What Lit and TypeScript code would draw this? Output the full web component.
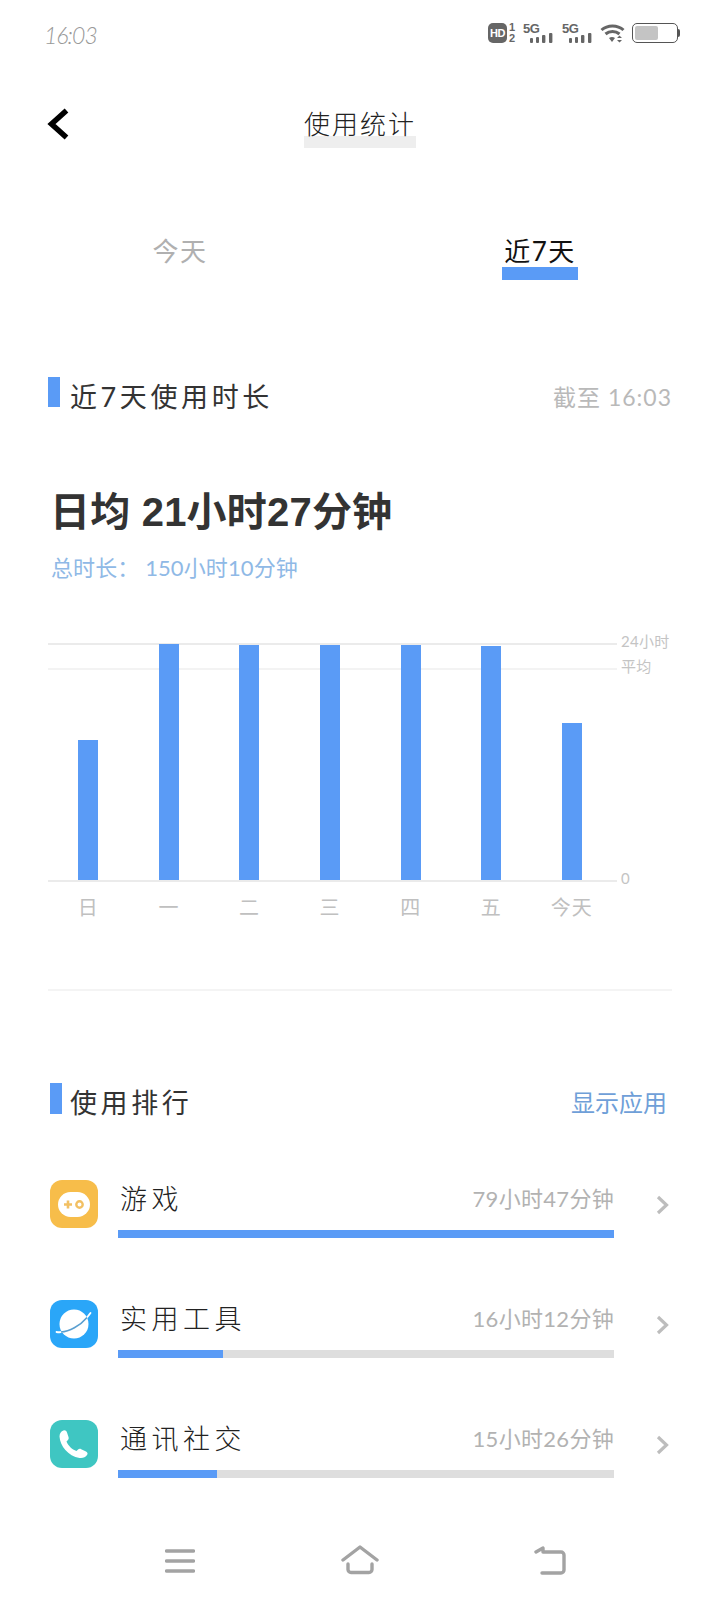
import { LitElement, html, css } from 'lit';
import { customElement } from 'lit/decorators.js';

const BARS = [
  { label: '日', h: 140 },
  { label: '一', h: 236 },
  { label: '二', h: 235 },
  { label: '三', h: 235 },
  { label: '四', h: 235 },
  { label: '五', h: 234 },
  { label: '今天', h: 157 },
];

const LINES = [
  { top: 0, label: '24小时', cls: 'strong' },
  { top: 25, label: '平均', cls: '' },
  { top: 237, label: '0', cls: 'strong' },
];

const gameIcon = html`<svg viewBox="0 0 48 48" width="48" height="48">
  <rect width="48" height="48" rx="12" fill="#f7bd4a"/>
  <rect x="8" y="12" width="32" height="25" rx="12.5" fill="#fff"/>
  <path d="M14 24.5h8M18 20.5v8" stroke="#f2c063" stroke-width="2.6" fill="none"/>
  <circle cx="29.5" cy="24.5" r="3.2" stroke="#f2c063" stroke-width="2.4" fill="none"/>
</svg>`;

const planetIcon = html`<svg viewBox="0 0 48 48" width="48" height="48">
  <rect width="48" height="48" rx="12" fill="#2aa6f8"/>
  <circle cx="24" cy="24" r="14.5" fill="#fff"/>
  <path d="M6.5 32C15 33.5 31 27 40.5 13" stroke="#fff" stroke-width="1.8" fill="none" stroke-linecap="round"/>
  <path d="M11 32C19 31.5 30 26 37 17.5" stroke="#5a9fd0" stroke-width="1.6" fill="none"/>
</svg>`;

const phoneIcon = html`<svg viewBox="0 0 48 48" width="48" height="48">
  <rect width="48" height="48" rx="12" fill="#3fc6c2"/>
  <path fill="#fff" d="M13.5 10.5C15 10 16.5 11 17 12.5L18.5 17C19 18.5 18.5 19.5 17.5 20.5L16.5 21.5C18 25.5 22 29.5 26.5 31L27.8 29.8C28.8 28.8 30 28.6 31.2 29.2L36 31.5C37.5 32.2 38 33.5 37.2 34.8C35.5 37.5 32.5 38.5 29.5 38C18 36 10 26 9.5 16.5C9.5 13.5 11 11.2 13.5 10.5Z"/>
</svg>`;

const RANKS = [
  { name: '游戏', time: '79小时47分钟', fill: 100, icon: gameIcon },
  { name: '实用工具', time: '16小时12分钟', fill: 21.1, icon: planetIcon },
  { name: '通讯社交', time: '15小时26分钟', fill: 20, icon: phoneIcon },
];

const signal = html`<svg class="sig" viewBox="0 0 23 10" width="23" height="10">
  <rect x="0" y="5" width="3" height="5" rx="1" fill="#666"/>
  <rect x="6" y="4" width="3" height="6" rx="1" fill="#666"/>
  <rect x="12" y="2" width="3.4" height="8" rx="1" fill="#666"/>
  <rect x="19" y="0" width="3.4" height="10" rx="1" fill="#666"/>
</svg>`;

@customElement('app-root')
export class AppRoot extends LitElement {
  static styles = css`
    :host {
      display: block;
      width: 720px;
      height: 1603px;
      background: #fff;
      overflow: hidden;
      font-family: Lato, 'Noto Sans CJK SC', sans-serif;
    }

    .page { display: flex; flex-direction: column; height: 100%; }

    /* status bar */
    .status {
      height: 66px;
      padding: 0 40px 0 44px;
      display: flex;
      align-items: center;
      color: #666;
    }
    .time {
      font-size: 23px;
      font-weight: 300;
      font-style: italic;
      color: #999;
      letter-spacing: -1px;
      margin-top: 4px;
      margin-right: auto;
    }
    .hd {
      width: 19px;
      height: 20px;
      border-radius: 5px;
      background: #666;
      color: #fff;
      font: bold 11px/20px 'Liberation Sans', sans-serif;
      text-align: center;
      letter-spacing: -0.5px;
    }
    .sims {
      display: flex;
      flex-direction: column;
      margin-left: 2px;
      width: 14px;
      font: bold 11px/11px 'Liberation Sans', sans-serif;
    }
    .net { position: relative; width: 30px; height: 20px; margin-right: 9px; display: flex; align-items: flex-end; justify-content: flex-end; }
    .net + .net { margin-right: 8px; }
    .net span {
      position: absolute;
      left: 0;
      top: 0;
      font: bold 13px/11px 'Liberation Sans', sans-serif;
      letter-spacing: -0.5px;
    }
    .wifi { margin-right: 7px; }
    .battery {
      box-sizing: border-box;
      width: 46px;
      height: 20px;
      border: 1.5px solid #555;
      border-radius: 5px;
      padding: 2px;
      display: flex;
    }
    .battery i { width: 23px; background: #c4c4c4; border-radius: 2px; }
    .nub { width: 2px; height: 8px; background: #555; border-radius: 0 2px 2px 0; }

    /* top bar */
    .topbar {
      margin-top: 44px;
      height: 38px;
      padding: 0 47px;
      display: grid;
      grid-template-columns: 22px 1fr 22px;
    }
    .back { display: block; margin-top: -2px; }
    .title {
      justify-self: center;
      font-size: 26px;
      line-height: 28px;
      padding: 0 0 10px;
      letter-spacing: 2px;
      color: #222;
      font-weight: 300;
      background: linear-gradient(#fff 0 26px, #eee 26px);
    }

    /* tabs */
    .tabs {
      margin-top: 88px;
      display: grid;
      grid-template-columns: 360px 360px;
      height: 44px;
    }
    .tab {
      display: flex;
      flex-direction: column;
      align-items: center;
      font-size: 26px;
      line-height: 31px;
      letter-spacing: 1.5px;
      color: #b0b0b0;
    }
    .tab.on { color: #111; }
    .tab.on::after {
      content: '';
      width: 76px;
      height: 13px;
      background: #5a9bf6;
    }

    /* section headers */
    .head {
      display: flex;
      align-items: center;
      padding: 0 48px;
      margin-top: 97px;
    }
    .head .mark { width: 12px; height: 30px; background: #5a9bf6; margin-right: 10px; align-self: flex-start; }
    .head .name { font-size: 27px; line-height: 30px; letter-spacing: 3.6px; color: #333; margin-top: 5px; }
    .head .side { margin-left: auto; font-size: 23px; line-height: 30px; color: #b9b9b9; letter-spacing: 1px; margin-top: 4px; }
    .head.rank { margin-top: 92px; padding: 0 53px 0 50px; }
    .head.rank .mark { height: 31px; margin-right: 8px; }
    .head.rank .side { color: #6f9fd8; font-size: 24px; letter-spacing: 0; }

    /* summary */
    .avg {
      margin: 78px 0 0 50px;
      font: bold 40px/44px 'Liberation Sans', 'Noto Sans CJK SC', sans-serif;
      letter-spacing: 0.2px;
      color: #333;
    }
    .total {
      margin: 20px 0 0 51px;
      font-size: 22px;
      line-height: 28px;
      color: #8fb9e6;
      letter-spacing: 0.1px;
    }

    /* chart */
    .chart { margin: 61px 0 0 48px; width: 569px; }
    .plot { position: relative; height: 237px; }
    .line { position: absolute; left: 0; right: 0; height: 2px; background: #f3f3f3; }
    .line.strong { background: #ebebeb; }
    .line span {
      position: absolute;
      left: calc(100% + 4px);
      top: -14px;
      font-size: 15px;
      line-height: 24px;
      white-space: nowrap;
      color: #c4c4c4;
      letter-spacing: 0.3px;
    }
    .bars, .days { display: grid; grid-template-columns: repeat(7, 80.6px); }
    .bars { position: relative; height: 100%; align-items: end; justify-items: center; }
    .bar { width: 20px; background: #5a9bf6; }
    .days { margin-top: 15px; justify-items: center; font-size: 20px; line-height: 24px; color: #c0c0c0; letter-spacing: 1px; }

    .divider { margin: 70px 48px 0; height: 2px; background: #f4f4f4; flex: none; }

    /* ranking */
    .ranks { margin-top: 62px; padding-left: 50px; display: flex; flex-direction: column; gap: 72px; }
    .row { display: flex; height: 48px; }
    .icon { width: 48px; height: 48px; margin-right: 20px; }
    .body { width: 496px; }
    .meta { display: flex; justify-content: space-between; align-items: center; height: 50px; padding-bottom: 16px; box-sizing: border-box; }
    .meta b { font-weight: 300; font-size: 27px; letter-spacing: 4.5px; color: #222; padding-left: 2px; }
    .meta span { font-size: 22px; letter-spacing: 0.3px; color: #b2b2b2; }
    .track { height: 8px; background: #dedede; }
    .fill { height: 100%; background: #5a9bf6; }
    .more { margin: 15px 0 0 42px; flex: none; }

    /* nav bar */
    .nav { margin-top: auto; padding: 0 0 28px 165px; display: flex; align-items: flex-start; }
    .nav svg { display: block; flex: none; }
    .nav .home { margin-left: 146px; }
    .nav .ret { margin-left: 155px; }
  `;

  render() {
    return html`<div class="page">
      <div class="status">
        <span class="time">16:03</span>
        <span class="hd">HD</span>
        <span class="sims"><span>1</span><span>2</span></span>
        <span class="net"><span>5G</span>${signal}</span>
        <span class="net"><span>5G</span>${signal}</span>
        <svg class="wifi" viewBox="0 0 25 20" width="25" height="20">
          <path d="M1.5 7C7.5 1.5 17.5 1.5 23.5 7" stroke="#666" stroke-width="3" fill="none"/>
          <path d="M5.5 11C9.5 7.5 15.5 7.5 19.5 11" stroke="#666" stroke-width="3" fill="none"/>
          <path d="M9 15C11 13.5 13 13.5 15 15L12 19Z" fill="#666"/>
          <path d="M17 15l2.5-2.5L22 15ZM17 17l2.5 2.5L22 17Z" fill="#666"/>
        </svg>
        <span class="battery"><i></i></span><span class="nub"></span>
      </div>

      <div class="topbar">
        <svg class="back" viewBox="0 0 22 32" width="22" height="32">
          <path d="M19.5 2.5L4.5 16L19.5 29.5" stroke="#000" stroke-width="5.5" fill="none"/>
        </svg>
        <div class="title">使用统计</div>
      </div>

      <div class="tabs">
        <div class="tab">今天</div>
        <div class="tab on">近7天</div>
      </div>

      <div class="head">
        <span class="mark"></span>
        <span class="name">近7天使用时长</span>
        <span class="side">截至 16:03</span>
      </div>

      <div class="avg">日均 21小时27分钟</div>
      <div class="total">总时长： 150小时10分钟</div>

      <div class="chart">
        <div class="plot">
          ${LINES.map((l) => html`<div class="line ${l.cls}" style="top:${l.top}px"><span>${l.label}</span></div>`)}
          <div class="bars">
            ${BARS.map((b) => html`<div class="bar" style="height:${b.h}px"></div>`)}
          </div>
        </div>
        <div class="days">${BARS.map((b) => html`<span>${b.label}</span>`)}</div>
      </div>

      <div class="divider"></div>

      <div class="head rank">
        <span class="mark"></span>
        <span class="name">使用排行</span>
        <span class="side">显示应用</span>
      </div>

      <div class="ranks">
        ${RANKS.map((r) => html`<div class="row">
          <div class="icon">${r.icon}</div>
          <div class="body">
            <div class="meta"><b>${r.name}</b><span>${r.time}</span></div>
            <div class="track"><div class="fill" style="width:${r.fill}%"></div></div>
          </div>
          <svg class="more" viewBox="0 0 13 20" width="13" height="20">
            <path d="M2 2L10.5 10L2 18" stroke="#bdbdbd" stroke-width="3.2" fill="none"/>
          </svg>
        </div>`)}
      </div>

      <div class="nav">
        <svg viewBox="0 0 30 30" width="30" height="30">
          <path d="M1.5 6h27M1.5 16h27M1.5 26h27" stroke="#a3a3a3" stroke-width="3.4" stroke-linecap="round" fill="none"/>
        </svg>
        <svg class="home" viewBox="0 0 38 30" width="38" height="30">
          <path d="M2 15L19 2L36 15" stroke="#a3a3a3" stroke-width="3.4" stroke-linecap="round" stroke-linejoin="round" fill="none"/>
          <path d="M7 19v5.5a3 3 0 0 0 3 3h18a3 3 0 0 0 3-3V19" stroke="#a3a3a3" stroke-width="3.4" stroke-linecap="round" fill="none"/>
        </svg>
        <svg class="ret" viewBox="0 0 32 30" width="32" height="30">
          <path d="M2 7L9 3v4h18a3 3 0 0 1 3 3v15a3 3 0 0 1-3 3H8" stroke="#a3a3a3" stroke-width="3.4" stroke-linecap="round" stroke-linejoin="round" fill="none"/>
        </svg>
      </div>
    </div>`;
  }
}
